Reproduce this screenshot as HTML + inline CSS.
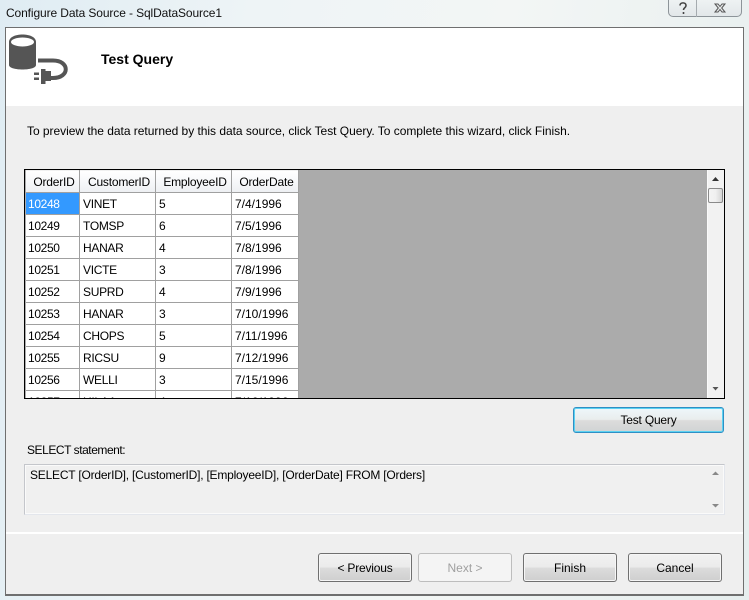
<!DOCTYPE html>
<html><head><meta charset="utf-8"><style>
html,body{margin:0;padding:0}
body{width:749px;height:600px;position:relative;overflow:hidden;font-family:"Liberation Sans",sans-serif;font-size:12px;color:#000;background:linear-gradient(100deg,#dfecf3 0,#eef4f6 30%,#f3f6f5 60%,#e6eeee 100%)}
.a{position:absolute;white-space:nowrap}
.t{position:absolute;white-space:nowrap;line-height:14px}
.btn{position:absolute;box-sizing:border-box;height:29px;width:94px;top:553px;border:1px solid #707070;border-radius:3px;background:linear-gradient(#f2f2f2 0,#ebebeb 48%,#dcdcdc 52%,#cfcfcf 100%);box-shadow:inset 0 0 0 1px #f6f6f6;text-align:center;line-height:29px}
.h{position:absolute;top:171px;height:21px;background:linear-gradient(#fff,#f7f8fa 50%,#eef0f3);line-height:22px;text-align:center;letter-spacing:-.2px;text-indent:3px}
.v{position:absolute;width:1px;top:170px;height:228px;background:#a0a0a0}
.r{position:absolute;height:1px;left:26px;width:273px;background:#a0a0a0}
.c{position:absolute;line-height:22px;height:22px;white-space:nowrap}
.n{letter-spacing:-.35px}
.s{letter-spacing:-.3px}
</style></head><body>
<div class="a" style="left:668px;top:0;width:74px;height:17px;box-sizing:border-box;border:1px solid #8d9499;border-top:0;border-radius:0 0 5px 5px;background:linear-gradient(#eef2f3,#e2e7e9)"></div>
<div class="a" style="left:696px;top:0;width:1px;height:17px;background:#a5abaf"></div>
<svg class="a" style="left:676px;top:1px" width="60" height="14" viewBox="0 0 60 14"><path d="M4 4.500 C4 1 10 1 10 4.500 C10 7 7.500 6.500 7.500 9 M7.500 11v2" fill="none" stroke="#444" stroke-width="1.600"/><path d="M39 3l3 0 2 2.500 2-2.500 3 0-3.300 4 3.300 4-3 0-2-2.500-2 2.500-3 0 3.300-4z" fill="#e6e9ea" stroke="#555" stroke-width="1"/></svg>
<div class="t" style="left:6px;top:6px;color:#111;letter-spacing:-.11px">Configure Data Source - SqlDataSource1</div>

<div class="a" style="left:5px;top:27px;width:739px;height:569px;box-sizing:border-box;border:1px solid #6f6f6f;border-bottom-width:2px;background:#efefef"></div>
<div class="a" style="left:6px;top:28px;width:737px;height:78px;background:#fff"></div>
<svg class="a" style="left:6px;top:32px" width="66" height="54" viewBox="6 32 66 54">
<path d="M9 42c0-10 27-10 27 0v23c0 6-27 6-27 0z" fill="#555"/>
<ellipse cx="22.500" cy="42" rx="11.500" ry="4.500" fill="#fff"/>
<path d="M38 60.500h15c17 0 17 17.500 0 17.500h-3" fill="none" stroke="#555" stroke-width="4"/>
<rect x="41" y="69" width="4.500" height="15" fill="#555"/><rect x="45" y="71" width="6" height="10" fill="#555"/>
<rect x="34" y="72.500" width="5" height="2.500" fill="#555"/><rect x="34" y="77.500" width="5" height="2.500" fill="#555"/>
</svg>
<div class="t" style="left:101px;top:52px;font-weight:bold;font-size:14px">Test Query</div>
<div class="t" style="left:27px;top:124px;letter-spacing:-.03px">To preview the data returned by this data source, click Test Query. To complete this wizard, click Finish.</div>

<div class="a" style="left:24px;top:169px;width:701px;height:230px;box-sizing:border-box;border:1px solid #000;background:#ababab"></div>
<div class="a" style="left:26px;top:170px;width:273px;height:228px;background:#fff;overflow:hidden"></div>
<div class="h" style="left:26px;width:53px">OrderID</div>
<div class="h" style="left:80px;width:75px">CustomerID</div>
<div class="h" style="left:156px;width:75px">EmployeeID</div>
<div class="h" style="left:232px;width:66px">OrderDate</div>
<div class="a" style="left:26px;top:170px;width:273px;height:1px;background:#f0f0f0"></div>
<div class="a" style="left:26px;top:193px;width:53px;height:21px;background:#3399ff"></div>
<div class="v" style="left:79px"></div><div class="v" style="left:155px"></div><div class="v" style="left:231px"></div><div class="v" style="left:298px"></div>
<div class="r" style="top:192px"></div><div class="r" style="top:214px"></div><div class="r" style="top:236px"></div><div class="r" style="top:258px"></div><div class="r" style="top:280px"></div><div class="r" style="top:302px"></div><div class="r" style="top:324px"></div><div class="r" style="top:346px"></div><div class="r" style="top:368px"></div><div class="r" style="top:390px"></div>

<div class="c n" style="left:28px;top:193px;color:#fff">10248</div><div class="c s" style="left:83px;top:193px">VINET</div><div class="c" style="left:159px;top:193px">5</div><div class="c" style="left:235px;top:193px">7/4/1996</div>
<div class="c n" style="left:28px;top:215px">10249</div><div class="c s" style="left:83px;top:215px">TOMSP</div><div class="c" style="left:159px;top:215px">6</div><div class="c" style="left:235px;top:215px">7/5/1996</div>
<div class="c n" style="left:28px;top:237px">10250</div><div class="c s" style="left:83px;top:237px">HANAR</div><div class="c" style="left:159px;top:237px">4</div><div class="c" style="left:235px;top:237px">7/8/1996</div>
<div class="c n" style="left:28px;top:259px">10251</div><div class="c s" style="left:83px;top:259px">VICTE</div><div class="c" style="left:159px;top:259px">3</div><div class="c" style="left:235px;top:259px">7/8/1996</div>
<div class="c n" style="left:28px;top:281px">10252</div><div class="c s" style="left:83px;top:281px">SUPRD</div><div class="c" style="left:159px;top:281px">4</div><div class="c" style="left:235px;top:281px">7/9/1996</div>
<div class="c n" style="left:28px;top:303px">10253</div><div class="c s" style="left:83px;top:303px">HANAR</div><div class="c" style="left:159px;top:303px">3</div><div class="c" style="left:235px;top:303px">7/10/1996</div>
<div class="c n" style="left:28px;top:325px">10254</div><div class="c s" style="left:83px;top:325px">CHOPS</div><div class="c" style="left:159px;top:325px">5</div><div class="c" style="left:235px;top:325px">7/11/1996</div>
<div class="c n" style="left:28px;top:347px">10255</div><div class="c s" style="left:83px;top:347px">RICSU</div><div class="c" style="left:159px;top:347px">9</div><div class="c" style="left:235px;top:347px">7/12/1996</div>
<div class="c n" style="left:28px;top:369px">10256</div><div class="c s" style="left:83px;top:369px">WELLI</div><div class="c" style="left:159px;top:369px">3</div><div class="c" style="left:235px;top:369px">7/15/1996</div>
<div class="a" style="left:26px;top:391px;width:272px;height:7px;overflow:hidden">
<div class="c n" style="left:2px;top:0">10257</div><div class="c s" style="left:57px;top:0">HILAA</div><div class="c" style="left:133px;top:0">4</div><div class="c" style="left:209px;top:0">7/16/1996</div>
</div>

<div class="a" style="left:707px;top:170px;width:17px;height:228px;background:#f2f2f2;box-sizing:border-box;border-left:1px solid #fafafa"></div>
<svg class="a" style="left:707px;top:170px" width="17" height="228"><path d="M5 11h7l-3.500-4z" fill="#333"/><path d="M5.500 217h6l-3 3.500z" fill="#555"/></svg>
<div class="a" style="left:708px;top:188px;width:15px;height:15px;box-sizing:border-box;border:1px solid #8a8a8a;border-radius:2px;background:linear-gradient(90deg,#f4f4f4,#f0f0f0 50%,#d6d6d6)"></div>

<div class="a" style="left:573px;top:407px;width:151px;height:26px;box-sizing:border-box;border:1px solid #2f8fc4;border-radius:3px;background:linear-gradient(#eef7fb 0,#e9eded 48%,#dcdcdc 52%,#d0d3d4 100%);box-shadow:inset 0 0 0 1px #5cd2f2;text-align:center;line-height:25px;letter-spacing:-.2px">Test Query</div>

<div class="t" style="left:27px;top:443px;letter-spacing:-.45px">SELECT statement:</div>
<div class="a" style="left:24px;top:464px;width:701px;height:51px;box-sizing:border-box;border:1px solid #c4c6cb;border-right-color:#e3e6ec;border-bottom-color:#e3e6ec;background:#f0f0f0;box-shadow:inset 0 0 0 1px #fafafa"></div>
<div class="t" style="left:30px;top:468px;letter-spacing:-.21px">SELECT [OrderID], [CustomerID], [EmployeeID], [OrderDate] FROM [Orders]</div>
<svg class="a" style="left:707px;top:465px" width="17" height="49"><path d="M5 10h7l-3.500-3.500z" fill="#888"/><path d="M5 39h7l-3.500 3.500z" fill="#888"/></svg>

<div class="a" style="left:6px;top:532px;width:737px;height:2px;background:#fff"></div>
<div class="btn" style="left:318px;letter-spacing:-.2px">&lt; Previous</div>
<div class="btn" style="left:418px;border-color:#bdbdbd;background:#f4f4f4;box-shadow:none;color:#a0a0a0">Next &gt;</div>
<div class="btn" style="left:523px">Finish</div>
<div class="btn" style="left:628px">Cancel</div>
</body></html>
